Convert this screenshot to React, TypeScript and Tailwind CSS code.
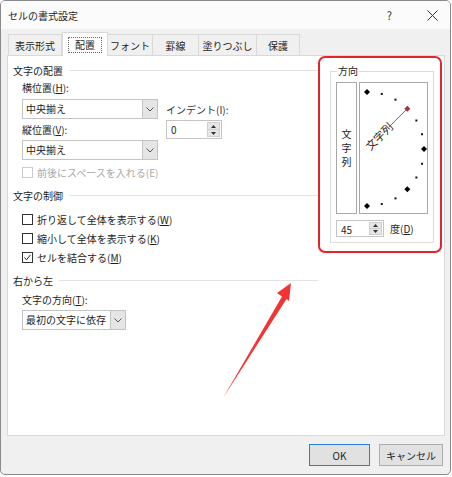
import React from "react";

const tabs = [
  { label: "表示形式", w: "w-[54px]" },
  { label: "配置", w: "w-[46px]", active: true },
  { label: "フォント", w: "w-[45px]" },
  { label: "罫線", w: "w-[46px]" },
  { label: "塗りつぶし", w: "w-[58px]" },
  { label: "保護", w: "w-[43px]" },
];

const Chevron = () => (
  <svg width="8" height="5" viewBox="0 0 8 5">
    <polyline points="0.5,0.5 4,4 7.5,0.5" fill="none" stroke="#555" strokeWidth="1" />
  </svg>
);

const Select = ({ value, className }: { value: string; className: string }) => (
  <div className={`flex h-[20px] border border-[#c4c4c4] bg-white ${className}`}>
    <span className="flex-1 pl-[3px] leading-[18px]">{value}</span>
    <div className="w-[15px] bg-[#e5e5e5] border-l border-[#c4c4c4] flex items-center justify-center">
      <Chevron />
    </div>
  </div>
);

const Spin = ({ value, className }: { value: string; className: string }) => (
  <div className={`flex border border-[#c4c4c4] bg-white ${className}`}>
    <span className="flex-1 pl-[4px] leading-[17px]">{value}</span>
    <div className="w-[13px] my-[1px] mr-[1px] flex flex-col bg-[#e6e6e6] border border-[#cfcfcf]">
      <div className="flex-1 flex items-center justify-center border-b border-[#cfcfcf]">
        <svg width="5" height="3" viewBox="0 0 5 3"><polygon points="0,3 2.5,0 5,3" fill="#333" /></svg>
      </div>
      <div className="flex-1 flex items-center justify-center">
        <svg width="5" height="3" viewBox="0 0 5 3"><polygon points="0,0 2.5,3 5,0" fill="#333" /></svg>
      </div>
    </div>
  </div>
);

const Check = ({ label, u, checked, disabled, className }: { label: string; u: string; checked?: boolean; disabled?: boolean; className: string }) => (
  <div className={`flex items-center h-[16px] ml-[9px] ${disabled ? "text-[#a8a8a8]" : ""} ${className}`}>
    <div className={`w-[11px] h-[11px] border bg-white flex items-center justify-center ${disabled ? "border-[#cccccc]" : "border-[#333]"}`}>
      {checked && (
        <svg width="9" height="9" viewBox="0 0 9 9">
          <polyline points="1.5,4.5 3.5,6.8 7.5,1.8" fill="none" stroke="#222" strokeWidth="1" />
        </svg>
      )}
    </div>
    <span className="ml-[4px]">
      {label}(<span className={disabled ? "" : "underline"}>{u}</span>)
    </span>
  </div>
);

const Header = ({ label, className }: { label: string; className: string }) => (
  <div className={`flex items-center h-[16px] gap-[6px] ${className}`}>
    <span>{label}</span>
    <div className="flex-1 h-px bg-[#e3e3e3]" />
  </div>
);

const Dial = () => {
  const cx = 7;
  const cy = 66;
  const r = 57;
  const dots = [];
  for (let a = 90; a >= -90; a -= 15) {
    const rad = (a * Math.PI) / 180;
    const x = cx + r * Math.cos(rad);
    const y = cy - r * Math.sin(rad);
    if (a === 45) continue;
    const big = a === 90 || a === 0 || a === -90 || a === -45;
    dots.push(
      big ? (
        <polygon key={a} points={`${x},${y - 3} ${x + 3},${y} ${x},${y + 3} ${x - 3},${y}`} fill="#000" />
      ) : (
        <rect key={a} x={x - 1} y={y - 1} width="2" height="2" fill="#111" />
      )
    );
  }
  const k = Math.SQRT1_2;
  return (
    <svg width="67" height="130" viewBox="0 0 67 130">
      {dots}
      <line x1={cx + 31 * k} y1={cy - 31 * k} x2={cx + 55 * k} y2={cy - 55 * k} stroke="#444" strokeWidth="0.8" />
      <polygon
        points={`${cx + r * k},${cy - r * k - 3} ${cx + r * k + 3},${cy - r * k} ${cx + r * k},${cy - r * k + 3} ${cx + r * k - 3},${cy - r * k}`}
        fill="#b0303a"
      />
      <text
        transform={`translate(${cx},${cy}) rotate(-45)`}
        x="1"
        y="4"
        fontSize="11"
        fill="#222"
        fontFamily="'Noto Sans CJK JP', sans-serif"
      >
        文字列
      </text>
    </svg>
  );
};

export default function App() {
  return (
    <div className="relative w-[452px] h-[477px] bg-white overflow-hidden font-['Noto_Sans_CJK_JP',sans-serif] text-[10px] text-[#1e1e1e]">
      <div className="w-[451px] h-[475px] border border-[#8a8a8a] rounded-[5px] overflow-hidden flex flex-col bg-[#f0f0f0]">
        {/* title bar */}
        <div className="h-[28px] bg-[#fbfbfb] flex items-center pl-[7px] pr-[12px]">
          <span>セルの書式設定</span>
          <span className="ml-auto text-[11px] text-[#333]">?</span>
          <svg className="ml-[35px]" width="11" height="11" viewBox="0 0 11 11">
            <line x1="0.5" y1="0.5" x2="10.5" y2="10.5" stroke="#333" strokeWidth="1" />
            <line x1="10.5" y1="0.5" x2="0.5" y2="10.5" stroke="#333" strokeWidth="1" />
          </svg>
        </div>

        {/* tabs */}
        <div className="h-[26px] flex items-end pl-[7px]">
          {tabs.map((t, i) =>
            t.active ? (
              <div key={i} className={`relative z-10 -mb-px h-[24px] bg-white border-t border-l border-r border-[#d9d9d9] flex items-center justify-center ${t.w}`}>
                <span className="border border-dotted border-[#666] px-[6px] leading-[14px]">{t.label}</span>
              </div>
            ) : (
              <div key={i} className={`h-[21px] border-t border-r border-[#d9d9d9] flex items-center justify-center ${i === 0 ? "border-l" : ""} ${t.w}`}>
                {t.label}
              </div>
            )
          )}
        </div>

        {/* panel */}
        <div className="ml-[6px] w-[438px] h-[381px] bg-white border border-[#d9d9d9] flex">
          <div className="w-[310px] pl-[5px] pt-[6px] flex flex-col">
            <Header label="文字の配置" className="" />
            <div className="flex mt-[2px]">
              <div className="flex flex-col ml-[9px]">
                <div className="h-[16px] leading-[16px]">横位置(<u>H</u>):</div>
                <Select value="中央揃え" className="w-[136px] mt-[3px]" />
                <div className="h-[16px] leading-[16px] mt-[3px]">縦位置(<u>V</u>):</div>
                <Select value="中央揃え" className="w-[136px] mt-[2px]" />
              </div>
              <div className="flex flex-col ml-[8px] mt-[22px]">
                <div className="h-[16px] leading-[16px] text-[#333]">インデント(I):</div>
                <Spin value="0" className="w-[56px] h-[19px] mt-[2px]" />
              </div>
            </div>
            <Check label="前後にスペースを入れる" u="E" disabled className="mt-[4px]" />

            <Header label="文字の制御" className="mt-[7px]" />
            <Check label="折り返して全体を表示する" u="W" className="mt-[8px]" />
            <Check label="縮小して全体を表示する" u="K" className="mt-[3px]" />
            <Check label="セルを結合する" u="M" checked className="mt-[3px]" />

            <Header label="右から左" className="mt-[7px]" />
            <div className="h-[16px] leading-[16px] ml-[9px] mt-[4px]">文字の方向(<u>T</u>):</div>
            <Select value="最初の文字に依存" className="w-[104px] mt-[2px] ml-[9px]" />
          </div>

          {/* orientation */}
          <div className="w-[124px] h-[197px] border-2 border-[#e3242b] rounded-[7px] pl-[10px] pr-[6px]">
            <fieldset className="mt-[5px] border border-[#dcdcdc] pl-[5px] pb-[5px]">
              <legend className="ml-[1px] px-[1px] leading-[16px]">方向</legend>
              <div className="flex gap-[2px] mt-[3px]">
                <div className="w-[21px] h-[132px] border border-[#a8a8a8] flex flex-col items-center justify-center text-[10px]">
                  <span className="block h-[14px] leading-[14px]">文</span>
                  <span className="block h-[14px] leading-[14px]">字</span>
                  <span className="block h-[14px] leading-[14px]">列</span>
                </div>
                <div className="w-[69px] h-[132px] border border-[#a8a8a8]">
                  <Dial />
                </div>
              </div>
              <div className="flex items-center mt-[6px]">
                <Spin value="45" className="w-[48px] h-[17px]" />
                <span className="ml-[6px]">度(<u>D</u>)</span>
              </div>
            </fieldset>
          </div>
        </div>

        {/* buttons */}
        <div className="flex justify-end gap-[9px] pt-[8px] pr-[7px]">
          <div className="w-[61px] h-[22px] border border-[#2a7fd4] bg-[#e1e1e1] flex items-center justify-center">OK</div>
          <div className="w-[64px] h-[22px] border border-[#adadad] bg-[#e1e1e1] flex items-center justify-center">キャンセル</div>
        </div>
      </div>

      {/* red annotation arrow */}
      <svg className="absolute inset-0 pointer-events-none" width="452" height="477" viewBox="0 0 452 477">
        <polygon points="291,283 289,301 286.5,299 223,398 282,296.5 277,293" fill="#f23434" />
      </svg>
    </div>
  );
}
